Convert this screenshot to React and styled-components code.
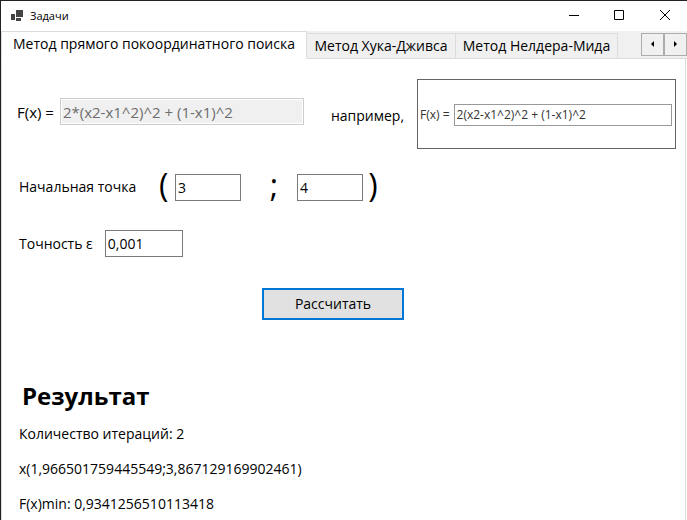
import React from "react";
import styled, { createGlobalStyle } from "styled-components";

const GlobalStyle = createGlobalStyle`
  * { box-sizing: border-box; }
  body { margin: 0; background: #fff; color: #000; }
  body, button, input { font: 14px/20px "Open Sans", "Noto Sans", sans-serif; }
`;

const Window = styled.main`
  display: flex;
  flex-direction: column;
  min-height: 100vh;
  border: solid #231f23;
  border-width: 1px 0 0 1px;
`;

const TitleBar = styled.header`
  display: flex;
  align-items: center;
  height: 30px;
  padding-left: 10px;
`;

const Title = styled.h1`
  flex: 1;
  margin: 0 0 0 6px;
  font-size: 11px;
  font-weight: 400;
  line-height: 16px;
`;

const CaptionButton = styled.button`
  display: flex;
  align-items: center;
  justify-content: center;
  width: 45px;
  height: 28px;
  padding: 0;
  border: 0;
  background: transparent;
`;

const TabStrip = styled.nav`
  display: flex;
  align-items: flex-end;
  height: 28px;
  background: #f0f0f0;
  box-shadow: inset 0 -1px #dcdcdc;
`;

const Tab = styled.button`
  flex: none;
  width: ${(p) => p.$width}px;
  height: ${(p) => (p.$active ? 28 : 26)}px;
  padding: ${(p) => (p.$active ? "0 0 2px" : "0")};
  border: 1px solid #dcdcdc;
  border-left-width: ${(p) => (p.$first ? 1 : 0)}px;
  border-bottom-color: ${(p) => (p.$active ? "#fff" : "#dcdcdc")};
  background: ${(p) => (p.$active ? "#fff" : "#f0f0f0")};
  color: #000;
  white-space: nowrap;
`;

const Scroller = styled.div`
  display: flex;
  align-self: flex-start;
  margin: 2px 0 0 auto;
`;

const ScrollButton = styled.button`
  display: flex;
  align-items: center;
  justify-content: center;
  width: 23px;
  height: 23px;
  padding: 0 0 2px;
  border: 1px solid #adadad;
  background: #f0f0f0;
`;

const Panel = styled.form`
  flex: 1;
  margin-right: 1px;
  padding: 20px 9px 4px 17px;
  border: solid #dcdcdc;
  border-width: 0 1px;
`;

const FunctionRow = styled.div`
  display: flex;
  align-items: flex-start;
  margin-left: -2px;
`;

const Field = styled.label`
  display: flex;
  align-items: center;
  gap: ${(p) => p.$gap}px;
  margin-top: ${(p) => p.$top || 0}px;
  font-size: ${(p) => (p.$large ? 15 : 14)}px;
  white-space: nowrap;
`;

const TextBox = styled.input`
  width: ${(p) => p.$width}px;
  height: 27px;
  padding: 0 2px;
  border: 1px solid #7a7a7a;
  border-radius: 0;
  background: #fff;
  color: #000;

  &:disabled {
    border-color: #ccc;
    background: #f0f0f0;
    box-shadow: inset 0 0 0 1px #fff;
    color: #6d6d6d;
    font-size: 15px;
  }
`;

const Hint = styled.span`
  margin: 27px 13px 0 27px;
`;

const Example = styled.div`
  display: flex;
  flex: 1;
  align-items: center;
  gap: 4px;
  height: 70px;
  padding: 1px 3px 0 2px;
  border: 1px solid #646464;
  color: #333;
  font-size: 12px;
  line-height: 16px;
  white-space: nowrap;
`;

const ExampleValue = styled.span`
  flex: 1;
  height: 22px;
  padding: 2px;
  border: 1px solid #999;
`;

const PointRow = styled.div`
  display: flex;
  align-items: center;
  height: 36px;
  margin-top: 20px;
`;

const Caption = styled.span`
  width: 140px;
`;

const Mark = styled.span`
  width: ${(p) => p.$width}px;
  padding-bottom: 4px;
  padding-left: ${(p) => p.$inset || 0}px;
  font-size: 32px;
  line-height: 36px;
  text-align: ${(p) => p.$align || "left"};
`;

const Submit = styled.button`
  display: block;
  width: 142px;
  height: 32px;
  margin: 31px 0 0 243px;
  padding: 0;
  border: 2px solid #0078d7;
  background: #e1e1e1;
  color: #000;
`;

const Results = styled.section`
  display: flex;
  flex-direction: column;
  gap: 15px;
  margin-top: 58px;
`;

const ResultTitle = styled.h2`
  margin: 0 0 -5px 3px;
  font-size: 24px;
  line-height: 36px;
`;

const ResultLine = styled.output`
  display: block;
`;

const tabs = [
  { name: "Метод прямого покоординатного поиска", width: 306 },
  { name: "Метод Хука-Дживса", width: 149 },
  { name: "Метод Нелдера-Мида", width: 162 },
];

function AppIcon() {
  return (
    <svg width="13" height="12" fill="#444" aria-hidden="true" shapeRendering="crispEdges">
      <path d="M0 4h4v6H0zM5 0h7v7H5zM5 8h5v3H5z" />
    </svg>
  );
}

function CaptionIcon({ d }) {
  return (
    <svg width="12" height="12" fill="none" stroke="#000" aria-hidden="true">
      <path d={d} />
    </svg>
  );
}

function Arrow({ d }) {
  return (
    <svg width="5" height="6" aria-hidden="true">
      <path d={d} />
    </svg>
  );
}

export default function App() {
  return (
    <Window>
      <GlobalStyle />
      <TitleBar>
        <AppIcon />
        <Title>Задачи</Title>
        <CaptionButton aria-label="Свернуть"><CaptionIcon d="M0 5.5h10" /></CaptionButton>
        <CaptionButton aria-label="Развернуть"><CaptionIcon d="M.5 .5h9v9h-9z" /></CaptionButton>
        <CaptionButton aria-label="Закрыть"><CaptionIcon d="M1 0l10 10M11 0L1 10" /></CaptionButton>
      </TitleBar>
      <TabStrip>
        {tabs.map((tab, i) => (
          <Tab key={tab.name} type="button" $width={tab.width} $active={i === 0} $first={i === 0}>
            {tab.name}
          </Tab>
        ))}
        <Scroller>
          <ScrollButton type="button" aria-label="Назад"><Arrow d="M4 0v6L1 3z" /></ScrollButton>
          <ScrollButton type="button" aria-label="Вперёд"><Arrow d="M1 0v6l3-3z" /></ScrollButton>
        </Scroller>
      </TabStrip>
      <Panel onSubmit={(e) => e.preventDefault()}>
        <FunctionRow>
          <Field $gap={6} $top={19} $large>
            F(x) =
            <TextBox $width={244} disabled defaultValue="2*(x2-x1^2)^2 + (1-x1)^2" />
          </Field>
          <Hint>например,</Hint>
          <Example>
            F(x) =
            <ExampleValue>2(x2-x1^2)^2 + (1-x1)^2</ExampleValue>
          </Example>
        </FunctionRow>
        <PointRow>
          <Caption id="start">Начальная точка</Caption>
          <Mark $width={16}>(</Mark>
          <TextBox $width={66} aria-labelledby="start" defaultValue="3" />
          <Mark $width={56} $inset={10} $align="center">;</Mark>
          <TextBox $width={66} aria-labelledby="start" defaultValue="4" />
          <Mark $width={20} $align="center">)</Mark>
        </PointRow>
        <Field $gap={12} $top={25}>
          Точность ε
          <TextBox $width={78} defaultValue="0,001" />
        </Field>
        <Submit type="submit">Рассчитать</Submit>
        <Results>
          <ResultTitle>Результат</ResultTitle>
          <ResultLine>Количество итераций: 2</ResultLine>
          <ResultLine>x(1,966501759445549;3,867129169902461)</ResultLine>
          <ResultLine>F(x)min: 0,9341256510113418</ResultLine>
        </Results>
      </Panel>
    </Window>
  );
}
